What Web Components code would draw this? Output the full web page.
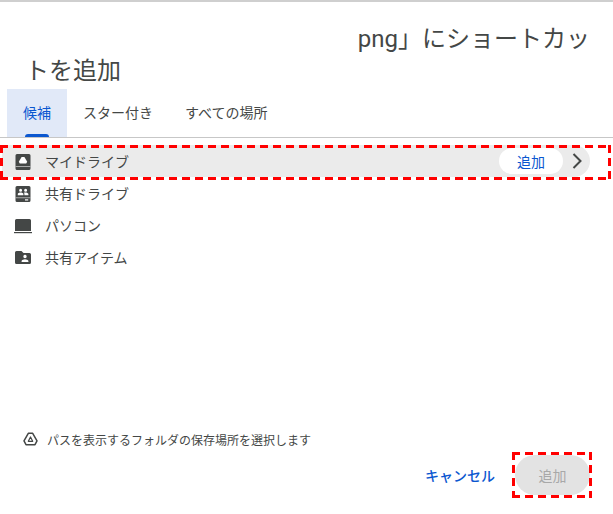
<!DOCTYPE html>
<html lang="ja">
<head>
<meta charset="utf-8">
<title>ショートカットを追加</title>
<style>
  html, body { margin: 0; height: 100%; background: #fff; }
  body { font-family: Roboto, "Noto Sans CJK JP", sans-serif; color: #444746; overflow: hidden; }
</style>
</head>
<body>
<picker-dialog>
  <picker-title slot="title"></picker-title>
  <picker-tabs slot="tabs">
    <picker-tab active>候補</picker-tab>
    <picker-tab>スター付き</picker-tab>
    <picker-tab>すべての場所</picker-tab>
  </picker-tabs>
  <location-row slot="rows" icon="mydrive" selected>マイドライブ</location-row>
  <location-row slot="rows" icon="shared">共有ドライブ</location-row>
  <location-row slot="rows" icon="computer">パソコン</location-row>
  <location-row slot="rows" icon="sharedfolder">共有アイテム</location-row>
  <picker-footer slot="footer"></picker-footer>
</picker-dialog>
<script>
// red annotation frame, the border: dashed of the browser gives shorter dashes
const DASH_H = "repeating-linear-gradient(90deg, #f00 0 8px, transparent 8px 13px)";
const DASH_V = "repeating-linear-gradient(180deg, #f00 0 8px, transparent 8px 13px)";
const DASH_FRAME = `
  background:
    ${DASH_H} left top / 100% 3px no-repeat,
    ${DASH_H} left bottom / 100% 3px no-repeat,
    ${DASH_V} left top / 3px 100% no-repeat,
    ${DASH_V} right top / 3px 100% no-repeat;
`;

class PickerDialog extends HTMLElement {
  constructor() {
    super();
    this.attachShadow({ mode: "open" });
    this.shadowRoot.innerHTML = `
      <style>
        :host {
          display: flex;
          flex-direction: column;
          height: 514px;
          box-sizing: border-box;
          border-top: 2px solid #cfcfcf;
        }
        #rows { flex: 1; padding-top: 7px; display: flex; flex-direction: column; }
      </style>
      <slot name="title"></slot>
      <slot name="tabs"></slot>
      <div id="rows"><slot name="rows"></slot></div>
      <slot name="footer"></slot>
    `;
  }
}
customElements.define("picker-dialog", PickerDialog);

class PickerTitle extends HTMLElement {
  constructor() {
    super();
    this.attachShadow({ mode: "open" });
    this.shadowRoot.innerHTML = `
      <style>
        :host { display: block; height: 87px; font-size: 24px; line-height: 32px; color: #444746; }
        div { white-space: nowrap; }
        #first { padding-top: 21px; margin-left: 350px; width: 240px; display: flex; justify-content: flex-end; }
        #second { margin-left: 25px; }
      </style>
      <div id="first"><span>png」にショートカッ</span></div>
      <div id="second">トを追加</div>
    `;
  }
}
customElements.define("picker-title", PickerTitle);

class PickerTabs extends HTMLElement {
  constructor() {
    super();
    this.attachShadow({ mode: "open" });
    this.shadowRoot.innerHTML = `
      <style>
        :host {
          display: flex;
          padding-left: 7px;
          height: 49px;
          box-sizing: border-box;
          border-bottom: 1px solid #c7c7c7;
        }
      </style>
      <slot></slot>
    `;
  }
}
customElements.define("picker-tabs", PickerTabs);

class PickerTab extends HTMLElement {
  constructor() {
    super();
    this.attachShadow({ mode: "open" });
    this.shadowRoot.innerHTML = `
      <style>
        :host {
          position: relative;
          display: flex;
          align-items: center;
          padding: 0 16px 3px;
          font-size: 14px;
          color: #444746;
        }
        :host([active]) { background: #e1e9f8; color: #0b57d0; }
        :host([active])::after {
          content: "";
          position: absolute;
          left: 18px;
          right: 18px;
          bottom: 0;
          height: 3px;
          border-radius: 3px 3px 0 0;
          background: #0b57d0;
        }
      </style>
      <slot></slot>
    `;
  }
}
customElements.define("picker-tab", PickerTab);

const ICONS = {
  mydrive: `<svg width="18" height="18" viewBox="0 0 18 18"><path fill="#444746" d="M3 2h12a1.500 1.500 0 0 1 1.500 1.500v13A1.500 1.500 0 0 1 15 18H3a1.500 1.500 0 0 1-1.500-1.500v-13A1.500 1.500 0 0 1 3 2z"/><rect x="1.500" y="14" width="15" height=".8" fill="#c4c4c4"/><path fill="#fff" d="M7.600 5h2.800l2.800 4.700-1 1.800H5.800l-1-1.800z"/></svg>`,
  shared: `<svg width="18" height="18" viewBox="0 0 18 18"><path fill="#444746" d="M3 2h12a1.500 1.500 0 0 1 1.500 1.500v13A1.500 1.500 0 0 1 15 18H3a1.500 1.500 0 0 1-1.500-1.500v-13A1.500 1.500 0 0 1 3 2z"/><rect x="1.500" y="13.400" width="15" height=".8" fill="#c4c4c4"/><rect x="11" y="15.300" width="3.200" height="1.200" fill="#fff"/><path fill="#fff" d="M6.600 4.800a1.500 1.500 0 1 1 0 3 1.500 1.500 0 0 1 0-3zm5 0a1.500 1.500 0 1 1 0 3 1.500 1.500 0 0 1 0-3zM3.800 11.200V10c0-1 1.800-1.500 2.800-1.500S9.400 9 9.400 10v1.200zm6.600 0V10c0-.6-.2-1-.6-1.300.6-.2 1.300-.3 1.800-.3 1 0 2.800.5 2.800 1.600v1.200z"/></svg>`,
  computer: `<svg width="18" height="18" viewBox="0 0 18 18"><path fill="#444746" d="M2.500 3h13A1.500 1.500 0 0 1 17 4.500V15H1V4.500A1.500 1.500 0 0 1 2.500 3z"/><rect x="0" y="16" width="18" height="1.200" fill="#444746"/></svg>`,
  sharedfolder: `<svg width="18" height="18" viewBox="0 0 18 18"><path fill="#444746" d="M2.500 3h5l2 2h6A1.500 1.500 0 0 1 17 6.500v8a1.500 1.500 0 0 1-1.500 1.500h-13A1.500 1.500 0 0 1 1 14.500v-10A1.500 1.500 0 0 1 2.500 3z"/><path fill="#fff" d="M11 6.800a1.700 1.700 0 1 1 0 3.400 1.700 1.700 0 0 1 0-3.400zM7.600 14v-1c0-1.100 2.300-1.800 3.400-1.800s3.400.7 3.400 1.800v1z"/></svg>`,
};

class LocationRow extends HTMLElement {
  constructor() {
    super();
    this.attachShadow({ mode: "open" });
    const selected = this.hasAttribute("selected");
    this.shadowRoot.innerHTML = `
      <style>
        :host {
          position: relative;
          display: flex;
          align-items: center;
          height: 32px;
          margin-right: 23px;
          padding-left: 14px;
          font-size: 14px;
          color: #444746;
        }
        :host([selected]) {
          background: #ebebeb;
          border-radius: 0 16px 16px 0;
          margin-left: 2px;
          padding-left: 12px;
        }
        :host([selected])::after {
          content: "";
          position: absolute;
          left: -2px;
          right: -21px;
          top: 0;
          bottom: -3px;
          ${DASH_FRAME}
        }
        #icon { width: 31px; height: 18px; flex: none; }
        #icon svg { display: block; }
        #label { flex: 1; }
        #add {
          width: 64px;
          height: 26px;
          border-radius: 13px;
          background: #fff;
          color: #0b57d0;
          display: flex;
          align-items: center;
          justify-content: center;
          margin-right: 2px;
        }
        #more { width: 24px; height: 24px; margin-right: 1px; }
      </style>
      <span id="icon">${ICONS[this.getAttribute("icon")]}</span>
      <span id="label"><slot></slot></span>
      ${selected ? `<span id="add">追加</span>
      <svg id="more" viewBox="0 0 24 24"><path fill="none" stroke="#444746" stroke-width="2" d="M8.500 5 15.500 12 8.500 19"/></svg>` : ""}
    `;
  }
}
customElements.define("location-row", LocationRow);

class PickerFooter extends HTMLElement {
  constructor() {
    super();
    this.attachShadow({ mode: "open" });
    this.shadowRoot.innerHTML = `
      <style>
        :host { display: block; padding: 0 23px 19px 23px; }
        #hint { display: flex; align-items: center; gap: 9px; font-size: 12px; color: #444746; height: 18px; margin-bottom: 7px; }
        #hint svg { flex: none; }
        #actions { display: flex; justify-content: flex-end; align-items: center; gap: 20px; }
        #cancel { font-size: 14px; font-weight: 500; color: #0b57d0; }
        #submit {
          position: relative;
          width: 75px;
          height: 40px;
          border-radius: 20px;
          background: #e3e3e3;
          color: #a8a8a8;
          font-size: 14px;
          display: flex;
          align-items: center;
          justify-content: center;
        }
        #submit::after {
          content: "";
          position: absolute;
          left: -3px;
          right: -2px;
          top: -3px;
          bottom: -3px;
          ${DASH_FRAME}
        }
      </style>
      <div id="hint">
        <svg width="15" height="14" viewBox="0 0 15 14"><path fill="none" stroke="#444746" stroke-width="1.500" stroke-linejoin="round" d="M5.300 1.300h4.400l4.300 7.500-2 3.900H3L1 8.800z"/><path fill="none" stroke="#444746" stroke-width="1.200" stroke-linejoin="round" d="M7.500 5 5.300 9.300h4.400z"/></svg>
        <span>パスを表示するフォルダの保存場所を選択します</span>
      </div>
      <div id="actions">
        <span id="cancel">キャンセル</span>
        <span id="submit">追加</span>
      </div>
    `;
  }
}
customElements.define("picker-footer", PickerFooter);
</script>
</body>
</html>
